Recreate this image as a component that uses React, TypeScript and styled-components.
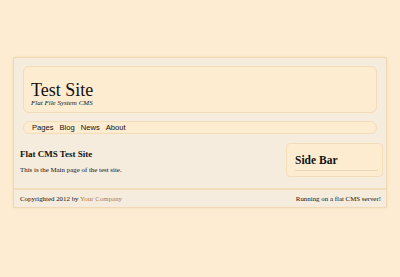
import React from "react";
import styled, { createGlobalStyle } from "styled-components";

const Global = createGlobalStyle`
  html, body { margin: 0; padding: 0; background: #fdecd1; }
  body { font-family: "Liberation Serif", "Times New Roman", serif; color: #111; }
`;

const Page = styled.div`
  padding: 57px 13px 0;
  height: 277px;
  box-sizing: border-box;
`;

const Wrapper = styled.div`
  background: #f6ecde;
  border: 1px solid #f0d9b4;
  border-radius: 2px;
  box-shadow: 0 0 2px rgba(230, 200, 150, 0.5);
  padding: 8px 0 0;
`;

const Header = styled.header`
  margin: 0 9px;
  height: 47px;
  background: #feecd1;
  border: 1px solid #f3dcb8;
  border-radius: 6px;
  padding: 14px 0 0 7px;
  box-sizing: border-box;
`;

const SiteTitle = styled.h1`
  margin: 0;
  font-size: 18px;
  font-weight: normal;
  line-height: 18px;
`;

const Tagline = styled.div`
  font-size: 7px;
  font-style: italic;
  line-height: 8px;
`;

const Nav = styled.nav`
  margin: 8px 9px 0;
  height: 13px;
  background: #feecd1;
  border: 1px solid #f3dcb8;
  border-radius: 7px;
  display: flex;
  align-items: center;
  gap: 6px;
  padding: 0 0 0 8px;
  box-sizing: border-box;
`;

const NavLink = styled.a`
  font-family: "Liberation Sans", Arial, sans-serif;
  font-size: 7.6px;
  color: #111;
  text-decoration: none;
`;

const Body = styled.div`
  display: flex;
  justify-content: space-between;
  padding: 9px 3px 0 6px;
  height: 45px;
`;

const Main = styled.main`
  padding-top: 6px;
`;

const MainTitle = styled.h2`
  margin: 0;
  font-size: 9px;
  font-weight: bold;
  line-height: 11px;
`;

const MainText = styled.p`
  margin: 5px 0 0;
  font-size: 6.9px;
  line-height: 9px;
`;

const Sidebar = styled.aside`
  width: 97px;
  height: 34px;
  box-sizing: border-box;
  background: #feecd1;
  border: 1px solid #f3dcb8;
  border-radius: 4px;
  padding: 10px 4px 0 8px;
`;

const SideTitle = styled.h3`
  margin: 0;
  font-size: 11.5px;
  font-weight: bold;
  line-height: 13px;
  padding-bottom: 3px;
  border-bottom: 1px solid #ecd8ba;
`;

const Footer = styled.footer`
  border-top: 2px solid #f3dcb8;
  display: flex;
  justify-content: space-between;
  align-items: center;
  height: 17px;
  padding: 0 5px 0 6px;
  font-size: 6.9px;
`;

const FooterLink = styled.a`
  color: #b07a3c;
  text-decoration: none;
`;

export default function App() {
  return (
    <>
      <Global />
      <Page>
        <Wrapper>
          <Header>
            <SiteTitle>Test Site</SiteTitle>
            <Tagline>Flat File System CMS</Tagline>
          </Header>
          <Nav>
            <NavLink href="#">Pages</NavLink>
            <NavLink href="#">Blog</NavLink>
            <NavLink href="#">News</NavLink>
            <NavLink href="#">About</NavLink>
          </Nav>
          <Body>
            <Main>
              <MainTitle>Flat CMS Test Site</MainTitle>
              <MainText>This is the Main page of the test site.</MainText>
            </Main>
            <Sidebar>
              <SideTitle>Side Bar</SideTitle>
            </Sidebar>
          </Body>
          <Footer>
            <span>
              Copyrighted 2012 by <FooterLink href="#">Your Company</FooterLink>
            </span>
            <span>Running on a flat CMS server!</span>
          </Footer>
        </Wrapper>
      </Page>
    </>
  );
}
